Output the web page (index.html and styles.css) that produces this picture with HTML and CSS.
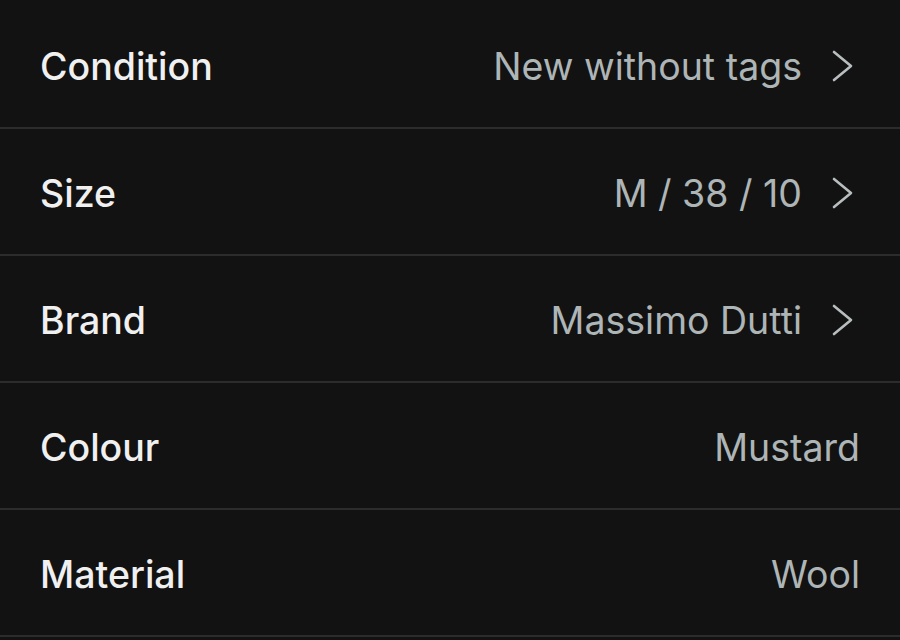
FILE: index.html
```html
<!DOCTYPE html>
<html>
<head lang="en">
    <meta charset="UTF-8">
    <title>Item details</title>
    <link rel="stylesheet" href="styles.css">
</head>
<body>
    <ul class="details">
        <li class="row">
            <span class="label">Condition</span>
            <span class="value">New without tags</span>
            <svg class="chevron" viewBox="0 0 28 32"><path d="M2 2 L19 16 L2 30"/></svg>
        </li>
        <li class="row">
            <span class="label">Size</span>
            <span class="value">M / 38 / 10</span>
            <svg class="chevron" viewBox="0 0 28 32"><path d="M2 2 L19 16 L2 30"/></svg>
        </li>
        <li class="row">
            <span class="label">Brand</span>
            <span class="value">Massimo Dutti</span>
            <svg class="chevron" viewBox="0 0 28 32"><path d="M2 2 L19 16 L2 30"/></svg>
        </li>
        <li class="row">
            <span class="label">Colour</span>
            <span class="value">Mustard</span>
        </li>
        <li class="row">
            <span class="label">Material</span>
            <span class="value">Wool</span>
        </li>
    </ul>
</body>
</html>
```
FILE: styles.css
```css
*{
    margin: 0;
    padding: 0;
}
html,body{
    background: #121212;
}
body{
    font-family: Inter, "Noto Sans", sans-serif;
}
li{
    list-style: none;
}
.details{
    margin-top: 2px;
}
.row{
    height: 122px;
    display: flex;
    align-items: center;
    padding: 3px 40px 0;
    border-bottom: 2px solid #2c2c2c;
}
.label{
    flex: 1;
    color: #f0f0f0;
    font-size: 37.5px;
    font-weight: 500;
}
.value{
    color: #aeb5b6;
    font-size: 37.5px;
}
.chevron{
    width: 28px;
    height: 32px;
    margin-left: 30px;
    fill: none;
    stroke: #b8bebf;
    stroke-width: 2.6;
    stroke-linecap: round;
    stroke-linejoin: round;
}
```
